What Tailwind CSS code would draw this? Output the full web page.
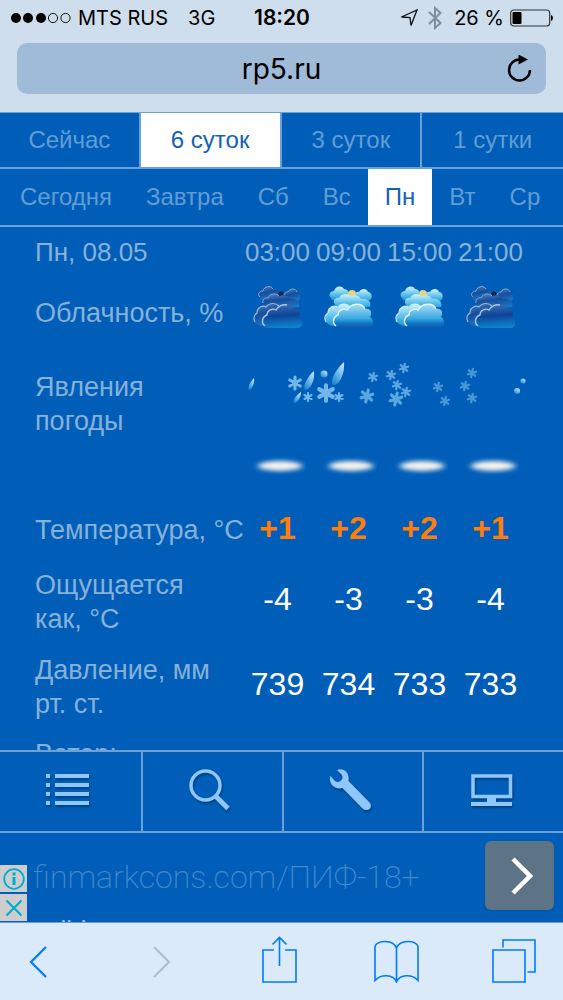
<!DOCTYPE html>
<html lang="ru">

<head>
    <meta charset="UTF-8">
    <meta name="viewport" content="width=device-width, initial-scale=1.0">
    <title>rp5.ru</title>
    <script src="https://cdn.jsdelivr.net/npm/@tailwindcss/browser@4"></script>
</head>

<body class="flex flex-col h-screen overflow-hidden bg-[#005eb8] font-['Liberation_Sans',Arial,sans-serif]">

    <!-- Shared shapes -->
    <svg class="absolute w-0 h-0" aria-hidden="true">
        <defs>
            <linearGradient id="day" x1="0" y1="0" x2="0" y2="1">
                <stop offset="0" stop-color="#d4f3fc" />
                <stop offset="0.6" stop-color="#58bfea" />
                <stop offset="1" stop-color="#1f93d6" />
            </linearGradient>
            <linearGradient id="day-front" x1="0" y1="0" x2="0" y2="1">
                <stop offset="0" stop-color="#a9dbf5" />
                <stop offset="0.6" stop-color="#3aa9e2" />
                <stop offset="0.8" stop-color="#0a76c6" />
                <stop offset="1" stop-color="#0d57a8" />
            </linearGradient>
            <linearGradient id="night" x1="0" y1="0" x2="0.3" y2="1">
                <stop offset="0" stop-color="#5583c0" />
                <stop offset="0.5" stop-color="#164d9c" />
                <stop offset="1" stop-color="#1a78c6" />
            </linearGradient>
            <linearGradient id="night-front" x1="0.3" y1="0" x2="0.4" y2="1">
                <stop offset="0" stop-color="#3d70b8" />
                <stop offset="0.5" stop-color="#0d4496" />
                <stop offset="0.7" stop-color="#0d61b3" />
                <stop offset="1" stop-color="#0c84cb" />
            </linearGradient>
            <linearGradient id="ice" x1="0.8" y1="0" x2="0.2" y2="1">
                <stop offset="0" stop-color="#c3e4fa" />
                <stop offset="0.5" stop-color="#6db8ec" />
                <stop offset="1" stop-color="#1686d2" />
            </linearGradient>
            <filter id="soft" x="-30%" y="-60%" width="160%" height="220%">
                <feGaussianBlur stdDeviation="3 2" />
            </filter>
            <path id="c-tl" d="M7 13C4 10 6 6 10 6C11 1 18 0 20 4C24 4 26 8 24 12L20 15L8 15Z" />
            <path id="c-tr" d="M30 12C30 8 33 6 35 7C37 3 43 3 44 7C48 7 49 13 46 15L44 17L31 15Z" />
            <path id="c-mid" d="M10 18C9 14 13 12 15 13C17 8 24 8 26 11C31 9 36 11 37 14C43 13 48 17 46 22L14 24Z" />
            <path id="c-left" d="M4 39C0 35 1 30 4 28C4 22 10 20 13 22C17 17 23 18 26 21L26 30L14 41L8 41Z" />
            <path id="c-front" d="M14 43C8 40 9 32 14 30C14 25 20 23 23 25C27 18 38 17 41 24C46 23 49 27 46 32C50 34 51 43 44 43Z" />
            <g id="flake">
                <path d="M0 -5V5M-4.4 -2.5L4.4 2.5M-4.4 2.5L4.4 -2.5" fill="none" stroke-width="2.6" stroke-linecap="round" />
                <circle r="2.4" stroke="none" />
            </g>
        </defs>
        <symbol id="cloud-day" viewBox="0 0 50 44">
            <use href="#c-tr" fill="url(#day)" />
            <use href="#c-tl" fill="url(#day)" />
            <circle cx="28" cy="9" r="4" fill="#e2d67f" />
            <use href="#c-mid" fill="url(#day)" />
            <use href="#c-left" fill="url(#day)" />
            <path d="M2 37C0 33 1 30 4 28C4 22 10 20 13 22" fill="none" stroke="#c8e9fa" stroke-width="1.2" />
            <use href="#c-front" fill="url(#day-front)" />
            <path d="M12 41C8 38 9 32 14 30C14 25 20 23 23 25C27 18 38 17 41 24" fill="none" stroke="#e3f6fd" stroke-width="1.4" />
        </symbol>
        <symbol id="cloud-night" viewBox="0 0 50 44">
            <use href="#c-tr" fill="url(#night)" />
            <use href="#c-tl" fill="url(#night)" />
            <circle cx="28" cy="9" r="2.5" fill="#0b2851" />
            <use href="#c-mid" fill="url(#night)" />
            <path d="M7 12C4 10 6 6 10 6C11 1 18 0 20 4M10 18C9 14 13 12 15 13C17 8 24 8 26 11M31 10C33 6 35 7 35 7C37 3 43 3 44 7" fill="none" stroke="#87a9d2" stroke-width="1" />
            <use href="#c-left" fill="url(#night)" />
            <path d="M2 37C0 33 1 30 4 28C4 22 10 20 13 22C17 17 23 18 26 21" fill="none" stroke="#9db9dc" stroke-width="1.2" />
            <use href="#c-front" fill="url(#night-front)" />
            <path d="M12 41C8 38 9 32 14 30C14 25 20 23 23 25C25 21 30 19 34 20" fill="none" stroke="#b3c8e4" stroke-width="1.4" />
        </symbol>
        <symbol id="snow-cover" viewBox="0 0 56 24">
            <ellipse cx="30" cy="11" rx="22" ry="5" fill="#f4f2ee" filter="url(#soft)" />
        </symbol>
    </svg>

    <!-- Status bar and address -->
    <header class="shrink-0 bg-[#cfdeed] text-black font-[Inter,sans-serif]">
        <div class="grid grid-cols-[1fr_auto_1fr] items-center h-9 pl-[11px] pr-2.5 text-xl whitespace-nowrap">
            <div class="flex items-center">
                <svg class="shrink-0 w-[61px] h-3 mr-1.5" viewBox="0 0 61 12">
                    <circle cx="5" cy="6" r="5" />
                    <circle cx="17" cy="6" r="5" />
                    <circle cx="30" cy="6" r="5" />
                    <g fill="none" stroke="#111">
                        <circle cx="42" cy="6" r="4.6" />
                        <circle cx="54.500" cy="6" r="4.6" />
                    </g>
                </svg>
                <span>MTS RUS</span>
                <span class="ml-5">3G</span>
            </div>
            <span class="text-center text-[21px] font-semibold">18:20</span>
            <div class="flex items-center justify-end">
                <svg class="shrink-0 w-[18px] h-[18px] mr-2.5" viewBox="0 0 18 18" fill="none" stroke="#111" stroke-width="1.3">
                    <path d="M17 1L11 16.500L10 8.500L1.500 8Z" />
                </svg>
                <svg class="shrink-0 w-3.5 h-6 mr-3" viewBox="0 0 14 24" fill="none" stroke="#7f8e9b" stroke-width="2">
                    <path d="M1 6L12.500 17L7 22V2L12.500 7L1 18" />
                </svg>
                <span>26 %</span>
                <svg class="shrink-0 w-[43px] h-[18px] ml-1.5" viewBox="0 0 43 18">
                    <rect x="0.700" y="1" width="39" height="16" rx="3" fill="none" stroke="#333" stroke-width="1.200" />
                    <rect x="2.500" y="3" width="9" height="12" rx="1" />
                    <path d="M41 6C43.500 6.500 43.500 11.500 41 12Z" />
                </svg>
            </div>
        </div>
        <div class="px-[17px] pt-[7px] pb-[18px]">
            <div class="flex items-center h-[51px] pl-[40px] pr-[14px] rounded-[10px] bg-[#a0bbd7]">
                <input type="text" value="rp5.ru" aria-label="Адрес" class="flex-1 min-w-0 bg-transparent text-center text-[28px] outline-none">
                <button aria-label="Обновить">
                    <svg class="w-[26px] h-[28px]" viewBox="0 0 26 28">
                        <path d="M24 15A10.500 10.500 0 1 1 13.500 4.500" fill="none" stroke="#000" stroke-width="2.500" />
                        <path d="M12.500 -0.500L22 4.500L12.500 9.500Z" />
                    </svg>
                </button>
            </div>
        </div>
    </header>

    <!-- Period tabs -->
    <nav class="shrink-0 grid grid-cols-4 h-[57px] border-y border-b-2 border-[#6aa2d8] text-2xl text-[#609dd5] divide-x-2 divide-[#6aa2d8]">
        <a href="#" class="flex items-center justify-center">Сейчас</a>
        <a href="#" class="flex items-center justify-center bg-white text-[#1262b5]">6 суток</a>
        <a href="#" class="flex items-center justify-center">3 суток</a>
        <a href="#" class="flex items-center justify-center">1 сутки</a>
    </nav>

    <!-- Day tabs -->
    <nav class="shrink-0 flex h-[58px] px-[3px] border-b-2 border-[#6aa2d8] text-2xl text-[#609dd5]">
        <a href="#" class="flex items-center px-[17px]">Сегодня</a>
        <a href="#" class="flex items-center px-[17px]">Завтра</a>
        <a href="#" class="flex items-center px-[17px]">Сб</a>
        <a href="#" class="flex items-center px-[17px]">Вс</a>
        <a href="#" class="flex items-center px-[17px] bg-white text-[#1262b5]">Пн</a>
        <a href="#" class="flex items-center px-[17px]">Вт</a>
        <a href="#" class="flex items-center px-[17px]">Ср</a>
    </nav>

    <!-- Forecast -->
    <main class="flex-1 min-h-0 overflow-hidden pl-[35px] pr-[37px]">
        <table class="w-full table-fixed text-[27px] leading-[34px] text-[#86b1d8]">
            <colgroup>
                <col>
                <col class="w-[71px]">
                <col class="w-[71px]">
                <col class="w-[71px]">
                <col class="w-[71px]">
            </colgroup>
            <thead class="text-[26px]">
                <tr class="h-[50px]">
                    <th class="text-left font-normal">Пн, 08.05</th>
                    <th class="font-normal">03:00</th>
                    <th class="font-normal">09:00</th>
                    <th class="font-normal">15:00</th>
                    <th class="font-normal">21:00</th>
                </tr>
            </thead>
            <tbody>
                <tr class="h-[72px]">
                    <th class="text-left font-normal whitespace-nowrap">Облачность, %</th>
                    <td class="align-top pt-2"><svg class="w-[50px] h-[44px] mx-auto"><use href="#cloud-night" /></svg></td>
                    <td class="align-top pt-2"><svg class="w-[50px] h-[44px] mx-auto"><use href="#cloud-day" /></svg></td>
                    <td class="align-top pt-2"><svg class="w-[50px] h-[44px] mx-auto"><use href="#cloud-day" /></svg></td>
                    <td class="align-top pt-2"><svg class="w-[50px] h-[44px] mx-auto"><use href="#cloud-night" /></svg></td>
                </tr>
                <tr class="h-[106px]">
                    <th class="text-left font-normal align-top pt-[21px]">Явления<br>погоды</th>
                    <td colspan="4" class="align-top pt-[6px]">
                        <svg class="w-full h-[60px]" viewBox="0 0 284 60" fill="#72b7ea" stroke="#72b7ea">
                            <g fill="url(#ice)" stroke="none">
                                <path d="M12 23C13 28 10 34 7 35C5 33 8 27 12 23Z" />
                                <path d="M72 16C73 26 68 35 63 35C60 31 66 21 72 16Z" />
                                <path d="M59 37C59 43 55 48 52 48C50 46 54 40 59 37Z" />
                                <path d="M102 7C103 19 97 31 91 30C87 26 95 13 102 7Z" />
                                <circle cx="82" cy="19" r="3.500" />
                                <circle cx="275" cy="36" r="3" />
                                <circle cx="281" cy="26" r="2.600" />
                            </g>
                            <use href="#flake" transform="translate(53 28) scale(1.2)" />
                            <use href="#flake" transform="translate(84 38) scale(1.55)" />
                            <use href="#flake" transform="translate(66 42) scale(0.8)" />
                            <use href="#flake" transform="translate(97 42) scale(0.8)" />
                            <g stroke="#5ba8e1" fill="#5ba8e1">
                                <use href="#flake" transform="translate(131 22) rotate(12) scale(0.85)" />
                                <use href="#flake" transform="translate(149 20) rotate(12) scale(0.85)" />
                                <use href="#flake" transform="translate(162 13) rotate(12) scale(0.85)" />
                                <use href="#flake" transform="translate(155 30) rotate(12) scale(0.85)" />
                                <use href="#flake" transform="translate(164 37) rotate(12) scale(0.85)" />
                                <use href="#flake" transform="translate(125 41) rotate(12) scale(1.2)" />
                                <use href="#flake" transform="translate(154 44) rotate(12) scale(1.2)" />
                            </g>
                            <g stroke="#4798d8" fill="#4798d8">
                                <use href="#flake" transform="translate(196 32) rotate(12) scale(0.85)" />
                                <use href="#flake" transform="translate(203 46) rotate(12) scale(0.85)" />
                                <use href="#flake" transform="translate(223 31) rotate(12) scale(0.85)" />
                                <use href="#flake" transform="translate(230 18) rotate(12) scale(0.85)" />
                                <use href="#flake" transform="translate(230 43) rotate(12) scale(0.85)" />
                            </g>
                        </svg>
                    </td>
                </tr>
                <tr class="h-[46px]">
                    <td></td>
                    <td class="align-top"><svg class="w-14 h-6 mx-auto"><use href="#snow-cover" /></svg></td>
                    <td class="align-top"><svg class="w-14 h-6 mx-auto"><use href="#snow-cover" /></svg></td>
                    <td class="align-top"><svg class="w-14 h-6 mx-auto"><use href="#snow-cover" /></svg></td>
                    <td class="align-top"><svg class="w-14 h-6 mx-auto"><use href="#snow-cover" /></svg></td>
                </tr>
                <tr class="h-[58px] text-center">
                    <th class="text-left font-normal whitespace-nowrap">Температура, °C</th>
                    <td class="text-[32px] font-bold text-[#ff7d0a] pb-1">+1</td>
                    <td class="text-[32px] font-bold text-[#ff7d0a] pb-1">+2</td>
                    <td class="text-[32px] font-bold text-[#ff7d0a] pb-1">+2</td>
                    <td class="text-[32px] font-bold text-[#ff7d0a] pb-1">+1</td>
                </tr>
                <tr class="h-[86px] text-center">
                    <th class="text-left font-normal">Ощущается<br>как, °C</th>
                    <td class="text-[32px] text-white pb-1.5">-4</td>
                    <td class="text-[32px] text-white pb-1.5">-3</td>
                    <td class="text-[32px] text-white pb-1.5">-3</td>
                    <td class="text-[32px] text-white pb-1.5">-4</td>
                </tr>
                <tr class="h-[84px] text-center">
                    <th class="text-left font-normal">Давление, мм<br>рт. ст.</th>
                    <td class="text-[32px] text-white pb-1.5">739</td>
                    <td class="text-[32px] text-white pb-1.5">734</td>
                    <td class="text-[32px] text-white pb-1.5">733</td>
                    <td class="text-[32px] text-white pb-1.5">733</td>
                </tr>
                <tr>
                    <th class="text-left font-normal pt-2">Ветер:</th>
                </tr>
            </tbody>
        </table>
    </main>

    <!-- Site menu -->
    <nav class="shrink-0 grid grid-cols-4 h-[83px] border-y-2 border-[#6aa2d8] text-[#8fc6fb]">
        <button aria-label="Меню" class="flex items-center justify-center pb-1 pr-1">
            <svg class="w-11 h-8 drop-shadow-[1px_2px_1px_#00000050]" viewBox="0 0 44 32" fill="currentColor">
                <path d="M0 0H4V4H0ZM0 9H4V13H0ZM0 18H4V22H0ZM0 27H4V31H0ZM9 0H43V4H9ZM9 9H43V13H9ZM9 18H43V22H9ZM9 27H43V31H9Z" />
            </svg>
        </button>
        <button aria-label="Поиск" class="flex items-center justify-center pb-1 pr-1 border-l-2 border-[#6aa2d8]">
            <svg class="w-[42px] h-[42px] drop-shadow-[1px_2px_1px_#00000050]" viewBox="0 0 42 42" fill="none" stroke="currentColor">
                <circle cx="16.500" cy="16.500" r="14.500" stroke-width="3.500" />
                <path d="M26.500 27L39 39.500" stroke-width="5" />
            </svg>
        </button>
        <button aria-label="Настройки" class="flex items-center justify-center pb-1 pr-1 border-l-2 border-[#6aa2d8]">
            <svg class="w-[42px] h-[42px] drop-shadow-[1px_2px_1px_#00000050]" viewBox="0 0 42 42" fill="currentColor">
                <path d="M7 1C14 -2 20 4 18.500 12L40 34C43 39 38 43 33 40L12.500 19C5 21 -2 15 0.500 7L5 12C9 15 15 10 11.500 5.500Z" />
            </svg>
        </button>
        <button aria-label="Полная версия" class="flex items-center justify-center pb-1 pr-1 border-l-2 border-[#6aa2d8]">
            <svg class="w-[42px] h-8 drop-shadow-[1px_2px_1px_#00000050]" viewBox="0 0 42 32">
                <path d="M2 2H39.500V22.500H2Z" fill="none" stroke="currentColor" stroke-width="3.500" />
                <path d="M16 24H25V28H41V32H0V28H16Z" fill="currentColor" />
            </svg>
        </button>
    </nav>

    <!-- Ad -->
    <aside class="shrink-0 relative h-[89px] overflow-hidden pl-[33px] pt-[26px]">
        <a href="#" class="block font-[Roboto,sans-serif] font-extralight text-[32px] leading-9 text-[#4289cc] whitespace-nowrap">finmarkcons.com/ПИФ-18+</a>
        <p class="mt-[19px] text-[26px] leading-8 text-[#9dc0e0]">solid</p>
        <div class="absolute left-0 bottom-px flex flex-col gap-0.5">
            <button aria-label="О рекламе" class="flex items-center justify-center w-[27px] h-[27px] bg-[#cdcdcf]">
                <svg class="w-[22px] h-[22px]" viewBox="0 0 22 22">
                    <circle cx="11" cy="11" r="9.800" fill="none" stroke="#00aecd" stroke-width="1.800" />
                    <path d="M9.500 4.500H12.500V7.500H9.500ZM9.500 9H12.500V17H9.500Z" fill="#00aecd" />
                </svg>
            </button>
            <button aria-label="Закрыть" class="flex items-center justify-center w-[27px] h-[27px] bg-[#cdcdcf]">
                <svg class="w-[18px] h-[18px]" viewBox="0 0 18 18">
                    <path d="M1.500 1.500L16.500 16.500M16.500 1.500L1.500 16.500" stroke="#00aecd" stroke-width="2.200" />
                </svg>
            </button>
        </div>
        <button aria-label="Перейти" class="absolute right-[9px] top-2 flex items-center justify-center w-[69px] h-[69px] pl-1 rounded-md bg-[#5d7487] shadow-sm">
            <svg class="w-[22px] h-[38px]" viewBox="0 0 22 38" fill="none" stroke="#fff" stroke-width="4.500">
                <path d="M2 2L19 19L2 36" />
            </svg>
        </button>
    </aside>

    <!-- Browser toolbar -->
    <footer class="shrink-0 flex items-center justify-between h-[78px] pl-[22px] pr-[27px] border-t border-[#6d9fce] bg-[#daeaf9] text-[#007aff]">
        <button aria-label="Назад" class="flex w-11 pl-[7px]">
            <svg class="w-[18px] h-8" viewBox="0 0 18 32" fill="none" stroke="currentColor" stroke-width="2.200">
                <path d="M17 1L2 16L17 31" />
            </svg>
        </button>
        <button aria-label="Вперёд" disabled class="flex justify-center w-11 text-[#b2bdc7]">
            <svg class="w-[18px] h-8" viewBox="0 0 18 32" fill="none" stroke="currentColor" stroke-width="2.200">
                <path d="M1 1L16 16L1 31" />
            </svg>
        </button>
        <button aria-label="Поделиться" class="flex justify-center w-11 pb-1">
            <svg class="w-[35px] h-[47px]" viewBox="0 0 35 47" fill="none" stroke="currentColor" stroke-width="1.600">
                <path d="M12 14H1V46H34V14H23M17.500 30V1.500M10.500 8.500L17.500 1.500L24.500 8.500" />
            </svg>
        </button>
        <button aria-label="Закладки" class="flex justify-center w-11">
            <svg class="shrink-0 w-[45px] h-[43px]" viewBox="0 0 45 43" fill="none" stroke="currentColor" stroke-width="1.600">
                <path d="M22.500 8C19 -1 3 0 1 6.500V40.500C7 34 19 34 22.500 42C26 34 38 34 44 40.500V6.500C42 0 26 -1 22.500 8ZM22.500 8V42" />
            </svg>
        </button>
        <button aria-label="Вкладки" class="flex justify-center w-11 pb-0.5">
            <svg class="w-11 h-11" viewBox="0 0 44 44" fill="none" stroke="currentColor" stroke-width="1.600">
                <path d="M1 11H33V43H1ZM11 8.500V1H43V33H35.500" />
            </svg>
        </button>
    </footer>

</body>

</html>
